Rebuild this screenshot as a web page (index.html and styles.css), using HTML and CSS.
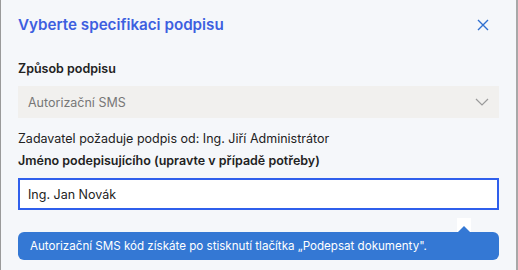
FILE: index.html
```html
<!DOCTYPE html>
<html lang="cs">
<head>
    <meta charset="UTF-8">
    <title>Vyberte specifikaci podpisu</title>
    <link rel="stylesheet" href="styles.css">
</head>
<body>
    <div class="dialog">
        <div class="dialog-header">
            <h2 class="dialog-title">Vyberte specifikaci podpisu</h2>
            <button class="close" aria-label="Zavřít">
                <svg width="12" height="12" viewBox="0 0 12 12"><path d="M1 1L11 11M11 1L1 11" stroke="#2f6fd0" stroke-width="1.4" fill="none"/></svg>
            </button>
        </div>
        <div class="dialog-body">
            <label class="label">Způsob podpisu</label>
            <div class="select">
                <span>Autorizační SMS</span>
                <svg width="14" height="8" viewBox="0 0 14 8"><path d="M1 1L7 7L13 1" stroke="#9a9a9a" stroke-width="1.2" fill="none"/></svg>
            </div>
            <p class="info">Zadavatel požaduje podpis od: Ing. Jiří Administrátor</p>
            <label class="label">Jméno podepisujícího (upravte v případě potřeby)</label>
            <input class="input" type="text" value="Ing. Jan Novák">
            <div class="hint">
                <span class="hint-arrow"></span>
                Autorizační SMS kód získáte po stisknutí tlačítka „Podepsat dokumenty".
            </div>
        </div>
    </div>
</body>
</html>
```

FILE: styles.css
```css
body {
    margin: 0;
    background: #f5f7fa;
    font-family: Inter, "Noto Sans", sans-serif;
    color: #222;
}
.dialog {
    height: 270px;
    box-sizing: border-box;
    border-left: 1px solid #9a9a9a;
    border-right: 2px solid #a8a8a8;
    padding: 0 17px 0 17px;
}
.dialog-header {
    display: flex;
    align-items: center;
    justify-content: space-between;
    height: 49px;
}
.dialog-title {
    margin: 0;
    font-size: 15.2px;
    font-weight: 600;
    color: #3d5fe0;
}
.close {
    background: none;
    border: 0;
    padding: 0;
    margin-right: 10px;
    display: flex;
    cursor: pointer;
}
.dialog-body {
    padding-top: 12px;
}
.label {
    display: block;
    font-size: 12.5px;
    font-weight: 600;
    color: #222;
    margin-bottom: 10px;
}
.select {
    display: flex;
    align-items: center;
    justify-content: space-between;
    height: 32px;
    padding: 0 10px;
    background: #f1f0ee;
    font-size: 12.5px;
    color: #777;
}
.info {
    margin: 13px 0 7px;
    font-size: 12.5px;
}
.input {
    display: block;
    box-sizing: border-box;
    width: 100%;
    height: 32px;
    border: 2px solid #2f5fec;
    padding: 0 8px;
    font: 12.5px Inter, "Noto Sans", sans-serif;
    color: #222;
    background: #fff;
    outline: none;
}
.hint {
    position: relative;
    margin-top: 22px;
    background: #3478d4;
    color: #fff;
    font-size: 11.6px;
    padding: 7px 12px;
    border-radius: 6px;
}
.hint-arrow {
    position: absolute;
    right: 28px;
    top: -14px;
    width: 14px;
    height: 14px;
    background: #fff;
}
.hint-arrow::after {
    content: "";
    position: absolute;
    left: 1px;
    bottom: 0;
    border: 6px solid transparent;
    border-bottom-color: #3478d4;
    border-top: 0;
}
```
